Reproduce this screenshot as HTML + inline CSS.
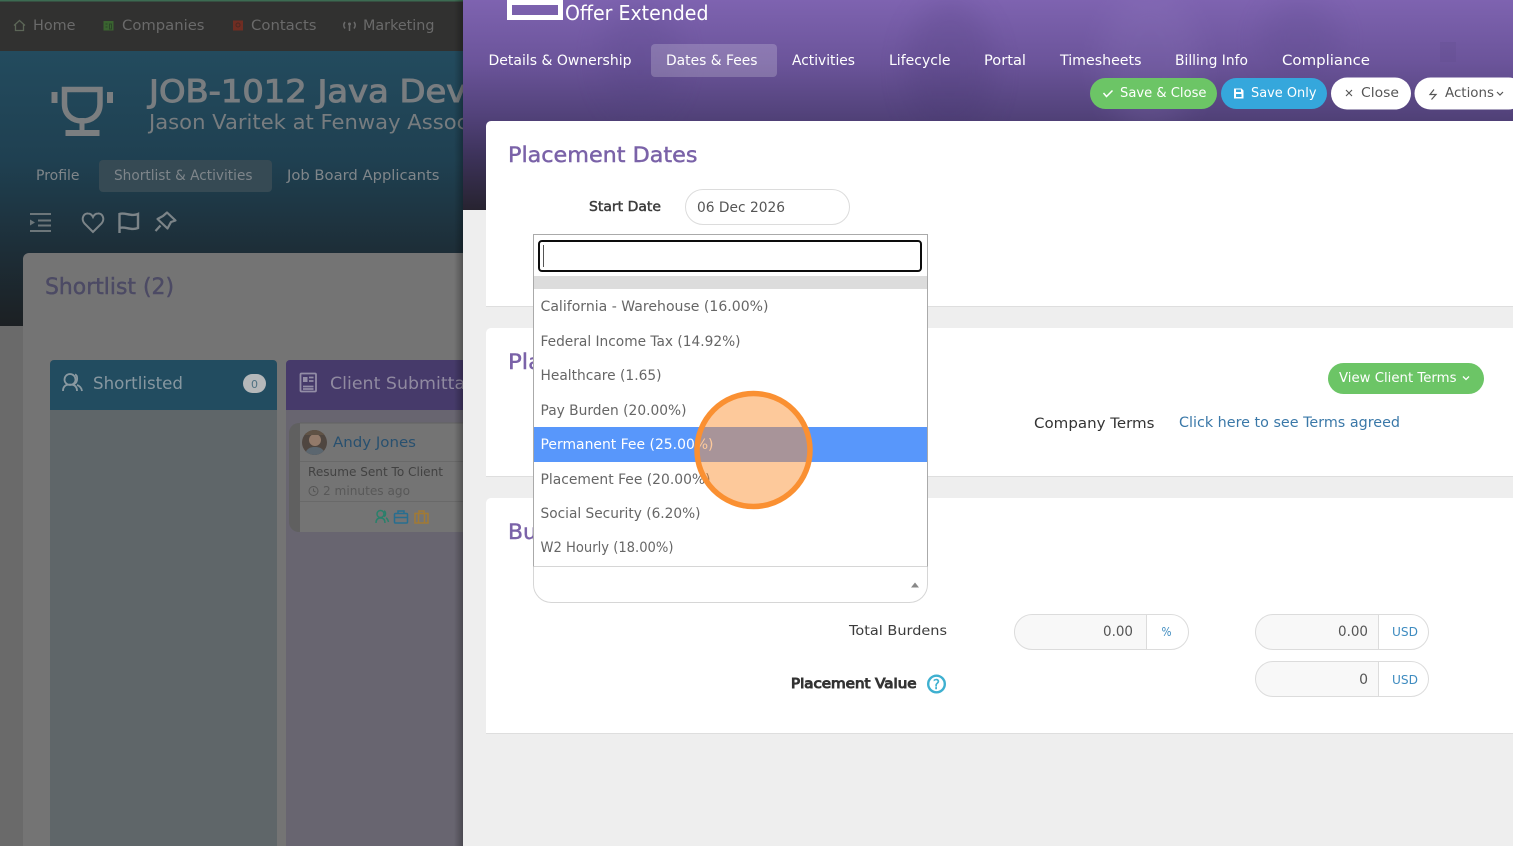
<!DOCTYPE html>
<html lang="en"><head><meta charset="utf-8"><title>Offer Extended</title>
<style>
html,body{margin:0;padding:0;width:1513px;height:846px;overflow:hidden;background:#eee}
svg{display:block}
text{font-family:"DejaVu Sans","Liberation Sans",sans-serif;white-space:pre}
.m{paint-order:stroke;stroke-width:.45px;stroke:currentColor}
.h{paint-order:stroke;stroke-width:1px;stroke:currentColor}
</style></head><body>
<svg xmlns="http://www.w3.org/2000/svg" width="1513" height="846" viewBox="0 0 1513 846">
<defs>
<linearGradient id="lh" x1="0" y1="0" x2="0" y2="1"><stop offset="0" stop-color="#234b5e"/><stop offset=".4" stop-color="#1f4051"/><stop offset=".72" stop-color="#1d2e38"/><stop offset="1" stop-color="#1c2023"/></linearGradient>
<linearGradient id="rh" x1="0" y1="0" x2="0" y2="1"><stop offset="0" stop-color="#7e63b0"/><stop offset=".3" stop-color="#6b549a"/><stop offset=".55" stop-color="#52427a"/><stop offset=".75" stop-color="#3c3259"/><stop offset="1" stop-color="#272330"/></linearGradient>
<linearGradient id="sh" x1="0" y1="0" x2="1" y2="0"><stop offset="0" stop-color="#000" stop-opacity="0"/><stop offset="1" stop-color="#000" stop-opacity=".28"/></linearGradient>
<clipPath id="lc"><rect x="0" y="0" width="463" height="846"/></clipPath>
<clipPath id="av"><circle cx="314.5" cy="442.5" r="12.5"/></clipPath>
<filter id="bl"><feGaussianBlur stdDeviation="14"/></filter>
</defs>

<!-- LEFT DIMMED PAGE -->
<g clip-path="url(#lc)">
<rect width="463" height="846" fill="#6a6a6a"/>
<rect width="463" height="51" fill="#313130"/>
<rect width="463" height="1.5" fill="#3c6b52"/>
<rect y="51" width="463" height="275" fill="url(#lh)"/>
<path d="M14 25.5 19.5 20.5 25 25.5M15.5 24.5V30.5H23.5V24.5" fill="none" stroke="#5c6657" stroke-width="1.3"/>
<text x="33" y="30" font-size="14" fill="#6a6a6a" textLength="42.5" lengthAdjust="spacingAndGlyphs">Home</text>
<path d="M103.5 21h10v9.5h-10z" fill="#3a6430"/><path d="M105.5 24h2M105.5 27h2M109.5 24h2v5h-2z" stroke="#2a4527" stroke-width="1" fill="none"/>
<text x="122" y="30" font-size="14" fill="#6a6a6a" textLength="82.5" lengthAdjust="spacingAndGlyphs">Companies</text>
<rect x="233" y="20.5" width="10" height="10" fill="#702d22"/><circle cx="238" cy="25" r="2" fill="none" stroke="#4a2822"/>
<text x="251" y="30" font-size="14" fill="#6a6a6a" textLength="65.5" lengthAdjust="spacingAndGlyphs">Contacts</text>
<path d="M349.5 24v7M345 22c-1.500 2-1.500 4.500 0 6.500M354 22c1.500 2 1.500 4.500 0 6.500" fill="none" stroke="#6a6a6a" stroke-width="1.5"/><circle cx="349.5" cy="24" r="1.500" fill="#6a6a6a"/>
<text x="363" y="30" font-size="14" fill="#6a6a6a" textLength="71.5" lengthAdjust="spacingAndGlyphs">Marketing</text>

<!-- trophy -->
<g fill="#7b7e80">
<rect x="51.5" y="92" width="6" height="11"/><rect x="107" y="92" width="6" height="11"/>
<rect x="65.5" y="130" width="34" height="6"/><rect x="79.5" y="118" width="5" height="13"/>
</g>
<path d="M64.5 89.5H100V104C100 115 92 121 82.25 121S64.5 115 64.5 104Z" fill="none" stroke="#7b7e80" stroke-width="5.5"/>
<text x="149" y="102" font-size="31" class="h" color="#797d80" fill="#797d80" textLength="338" lengthAdjust="spacingAndGlyphs">JOB-1012 Java Deve</text>
<text x="149" y="129" font-size="20" fill="#777c7f" textLength="338" lengthAdjust="spacingAndGlyphs">Jason Varitek at Fenway Associa</text>

<rect x="99" y="160" width="173" height="32" rx="4" fill="#364a54"/>
<text x="36" y="180" font-size="14" fill="#80868a" textLength="43.5" lengthAdjust="spacingAndGlyphs">Profile</text>
<text x="114" y="180" font-size="14" fill="#7e858a" textLength="138.5" lengthAdjust="spacingAndGlyphs">Shortlist &amp; Activities</text>
<text x="287" y="180" font-size="14" fill="#80868a" textLength="152.5" lengthAdjust="spacingAndGlyphs">Job Board Applicants</text>

<!-- icon row -->
<g fill="none" stroke="#6c767a" stroke-width="2">
<path d="M30 214h21M38 220.5h13M38 225.5h13M30 231h21"/>
<path d="M93 232 84.500 223.500C80.500 218.500 84 213 88 213.500 90.500 213.500 92 215 93 217 94 215 95.500 213.500 98 213.500 102 213 105.500 218.500 101.500 223.500Z" stroke="#7c8488"/>
<path d="M119.5 233V214C125 212 131 217 138 214V228C131 231 125 226 119.500 228" stroke="#7c8488" stroke-width="2.4"/>
<path d="M167 212.500 175.500 220.500 171 222 167.500 228.500 157.500 219 163 216ZM160.500 225.500 155.500 231" stroke="#7c8488" stroke-width="2.2" stroke-linejoin="round"/>
</g>
<path d="M30 219.5 35 222.5 30 225.5Z" fill="#6c767a"/>

<!-- main card -->
<rect x="23" y="253" width="460" height="620" rx="6" fill="#747474"/>
<text x="45" y="294" font-size="22" class="m" color="#4c4a64" fill="#4c4a64" textLength="129" lengthAdjust="spacingAndGlyphs">Shortlist (2)</text>

<!-- shortlisted column -->
<path d="M50 410V364a4 4 0 0 1 4-4H273a4 4 0 0 1 4 4V410Z" fill="#224c60"/>
<rect x="50" y="410" width="227" height="436" fill="#5f6669"/>
<g fill="none" stroke="#8a99a1" stroke-width="1.8"><circle cx="70" cy="379.5" r="5.500"/><path d="M63 391c0-5 3-6.500 7-6.500s7 1.500 7 6.500M75 374.500c3 1 3 8-1 9.500M77 385c3 1 4.500 3 5 6"/></g>
<text x="93" y="389" font-size="17" fill="#8797a0" textLength="90" lengthAdjust="spacingAndGlyphs">Shortlisted</text>
<rect x="243" y="374" width="23" height="19" rx="9.5" fill="#b5b8ba"/>
<text x="254.5" y="388" font-size="11" text-anchor="middle" fill="#4f7182">0</text>

<!-- submittal column -->
<path d="M286 410V364a4 4 0 0 1 4-4H480V410Z" fill="#463a6a"/>
<rect x="286" y="410" width="190" height="436" fill="#686570"/>
<g fill="none" stroke="#938da6" stroke-width="1.8"><rect x="300.5" y="373.500" width="15.5" height="18" rx="1"/><path d="M303 386.500h10.500M303 389h10.500M309 377.500h4.500M309 381h4.500"/></g>
<rect x="303" y="377" width="4.5" height="5" fill="#938da6"/>
<text x="330" y="389" font-size="17" fill="#908aa0" textLength="140" lengthAdjust="spacingAndGlyphs">Client Submittal</text>

<!-- candidate card -->
<path d="M300 423H299a10 10 0 0 0-10 10V522a10 10 0 0 0 10 10H300Z" fill="#606060"/>
<rect x="300" y="423" width="170" height="109" fill="#747474"/>
<path d="M300 423H470" stroke="#626262"/>
<g clip-path="url(#av)"><rect x="302" y="430" width="25" height="25" fill="#4f4640"/><circle cx="315" cy="440" r="6" fill="#927a6a"/><path d="M305 455c1-7 6-8 10-8s9 1 10 8Z" fill="#5b666f"/><rect x="302" y="430" width="25" height="5" fill="#5f5245"/></g>
<text x="333" y="447" font-size="14.5" fill="#28506f" textLength="83" lengthAdjust="spacingAndGlyphs">Andy Jones</text>
<path d="M300 461.5H470M300 501.5H470" stroke="#696969"/>
<text x="308" y="476" font-size="12.5" fill="#424242" textLength="135" lengthAdjust="spacingAndGlyphs">Resume Sent To Client</text>
<circle cx="313.5" cy="491" r="4.5" fill="none" stroke="#555" stroke-width="1"/><path d="M313.5 488.500v2.500l2 1" fill="none" stroke="#555"/>
<text x="323" y="495" font-size="12.5" fill="#585858" textLength="87" lengthAdjust="spacingAndGlyphs">2 minutes ago</text>
<g fill="none" stroke-width="1.5">
<g stroke="#2a806b"><circle cx="380.5" cy="514" r="3.5"/><path d="M376 523c0-4 2-5 4.500-5s4.500 1 4.500 5M384 511c2 .5 2 4.500 0 5.500M386 518c1.500 .5 2 2 2.500 4"/></g>
<g stroke="#276e90"><rect x="394.5" y="513.5" width="13" height="9.5" rx="1"/><path d="M398 513.500v-2.500h6v2.500M394.500 517.500h13"/></g>
<g stroke="#a17a34"><rect x="415" y="513.5" width="13" height="9.5"/><path d="M418.500 513.500v9.500M424.500 513.500v9.500M419 513.500v-2.500h5v2.500"/></g>
</g>
</g>

<!-- RIGHT PANEL -->
<rect x="454" width="9" height="846" fill="url(#sh)"/>
<rect x="463" width="1050" height="846" fill="#eeeeee"/>
<rect x="463" width="1050" height="210" fill="url(#rh)"/>
<g filter="url(#bl)" opacity=".16">
<ellipse cx="950" cy="70" rx="45" ry="70" fill="#3c2e66"/>
<ellipse cx="1150" cy="60" rx="50" ry="70" fill="#9a84c8"/>
<ellipse cx="640" cy="60" rx="40" ry="60" fill="#4c3c7c"/>
<ellipse cx="1300" cy="40" rx="40" ry="40" fill="#4c3c7c"/>
</g>
<rect x="1440" y="42" width="16" height="20" fill="#5e4a8a" opacity=".25"/>

<!-- offer icon -->
<path d="M507 0H563V20H507ZM512 5V15H558V5Z" fill="#fff" fill-rule="evenodd"/>
<text x="565" y="20" font-size="20" fill="#fff" textLength="143.5" lengthAdjust="spacingAndGlyphs">Offer Extended</text>

<!-- tabs -->
<rect x="651" y="44" width="126" height="33" rx="4" fill="#fff" fill-opacity=".2"/>
<g font-size="14" fill="#fff">
<text x="488.5" y="65" textLength="143" lengthAdjust="spacingAndGlyphs">Details &amp; Ownership</text>
<text x="666" y="65" textLength="91.5" lengthAdjust="spacingAndGlyphs">Dates &amp; Fees</text>
<text x="792" y="65" textLength="63" lengthAdjust="spacingAndGlyphs">Activities</text>
<text x="889" y="65" textLength="61.5" lengthAdjust="spacingAndGlyphs">Lifecycle</text>
<text x="984" y="65" textLength="42" lengthAdjust="spacingAndGlyphs">Portal</text>
<text x="1060" y="65" textLength="81.5" lengthAdjust="spacingAndGlyphs">Timesheets</text>
<text x="1175" y="65" textLength="73" lengthAdjust="spacingAndGlyphs">Billing Info</text>
<text x="1282" y="65" textLength="88" lengthAdjust="spacingAndGlyphs">Compliance</text>
</g>

<!-- action buttons -->
<rect x="1090" y="78" width="127" height="31" rx="15.5" fill="#6cc566"/>
<path d="M1103.5 93 1106.5 96.500 1112.5 90.500" fill="none" stroke="#fff" stroke-width="1.5"/>
<text x="1120" y="97" font-size="13" fill="#fff" textLength="86.5" lengthAdjust="spacingAndGlyphs">Save &amp; Close</text>
<rect x="1221" y="78" width="106" height="31" rx="15.5" fill="#35a7dc"/>
<path d="M1234 88.500h7.500l2 2v8h-9.500Z" fill="#fff"/><rect x="1236" y="89.5" width="5" height="2.5" fill="#35a7dc"/><rect x="1236" y="94" width="5.5" height="3" fill="#35a7dc"/>
<text x="1251" y="97" font-size="13" fill="#fff" textLength="65.5" lengthAdjust="spacingAndGlyphs">Save Only</text>
<rect x="1331" y="77.5" width="80" height="32" rx="16" fill="#fff"/>
<path d="M1346 90 1352 96M1352 90 1346 96" stroke="#555" stroke-width="1.1"/>
<text x="1361" y="97" font-size="13" fill="#555" textLength="38" lengthAdjust="spacingAndGlyphs">Close</text>
<rect x="1414.5" y="77.5" width="110" height="32" rx="16" fill="#fff"/>
<path d="M1434 89.500 1430 94.500H1436L1431.500 99.500" fill="none" stroke="#555" stroke-width="1.2"/>
<text x="1445" y="97" font-size="13" fill="#555" textLength="49" lengthAdjust="spacingAndGlyphs">Actions</text>
<path d="M1497 92 1500 95 1503 92" fill="none" stroke="#555" stroke-width="1.2"/>

<!-- white cards -->
<path d="M486 306V126a5 5 0 0 1 5-5H1513V306Z" fill="#fff"/>
<path d="M486 306.5H1513" stroke="#dedede"/>
<path d="M486 476V333a5 5 0 0 1 5-5H1513V476Z" fill="#fff"/>
<path d="M486 476.5H1513" stroke="#dedede"/>
<path d="M486 733V503a5 5 0 0 1 5-5H1513V733Z" fill="#fff"/>
<path d="M486 733.5H1513" stroke="#dedede"/>

<text x="508" y="162" font-size="21.5" class="m" color="#7a62a8" fill="#7a62a8" textLength="189.5" lengthAdjust="spacingAndGlyphs">Placement Dates</text>
<text x="589" y="211" font-size="13.5" class="m" color="#3b3b3b" fill="#3b3b3b" textLength="72" lengthAdjust="spacingAndGlyphs">Start Date</text>
<rect x="685.5" y="189.5" width="164" height="35" rx="17.5" fill="#fff" stroke="#dcdcdc"/>
<text x="697" y="212" font-size="14" fill="#555" textLength="88" lengthAdjust="spacingAndGlyphs">06 Dec 2026</text>

<text x="508" y="369" font-size="21.5" class="m" color="#7a62a8" fill="#7a62a8" textLength="180" lengthAdjust="spacingAndGlyphs">Placement Fees</text>
<text x="508" y="539" font-size="21.5" class="m" color="#7a62a8" fill="#7a62a8" textLength="90" lengthAdjust="spacingAndGlyphs">Burdens</text>

<rect x="1328" y="363" width="156" height="31" rx="15.5" fill="#6cc566"/>
<text x="1339" y="382" font-size="13" fill="#fff" textLength="117.5" lengthAdjust="spacingAndGlyphs">View Client Terms</text>
<path d="M1463 376.500 1466 379.500 1469 376.500" fill="none" stroke="#fff" stroke-width="1.3"/>
<text x="1034" y="428" font-size="14" fill="#333" textLength="120.5" lengthAdjust="spacingAndGlyphs">Company Terms</text>
<text x="1179" y="427" font-size="14" fill="#3a78a8" textLength="221" lengthAdjust="spacingAndGlyphs">Click here to see Terms agreed</text>

<!-- bottom fields -->
<text x="849" y="635" font-size="13.5" fill="#3b3b3b" textLength="98" lengthAdjust="spacingAndGlyphs">Total Burdens</text>
<path d="M1146.5 614.5H1032a17.5 17.5 0 0 0 0 35H1146.5Z" fill="#f8f8f8"/>
<rect x="1014.5" y="614.5" width="174" height="35" rx="17.5" fill="none" stroke="#dcdcdc"/><path d="M1146.5 614.5V649.5" stroke="#dcdcdc"/>
<text x="1133" y="636" font-size="14" text-anchor="end" fill="#555" textLength="30" lengthAdjust="spacingAndGlyphs">0.00</text>
<text x="1161.5" y="636" font-size="12" fill="#3f8cc0" textLength="10" lengthAdjust="spacingAndGlyphs">%</text>

<path d="M1378.5 614.5H1273a17.5 17.5 0 0 0 0 35H1378.5Z" fill="#f8f8f8"/>
<rect x="1255.5" y="614.5" width="173" height="35" rx="17.5" fill="none" stroke="#dcdcdc"/><path d="M1378.5 614.5V649.5" stroke="#dcdcdc"/>
<text x="1368" y="636" font-size="14" text-anchor="end" fill="#555" textLength="30" lengthAdjust="spacingAndGlyphs">0.00</text>
<text x="1392" y="636" font-size="12.5" fill="#3f8cc0" textLength="26" lengthAdjust="spacingAndGlyphs">USD</text>

<path d="M1378.5 661.5H1273a17.5 17.5 0 0 0 0 35H1378.5Z" fill="#f8f8f8"/>
<rect x="1255.5" y="661.5" width="173" height="35" rx="17.5" fill="none" stroke="#dcdcdc"/><path d="M1378.5 661.5V696.5" stroke="#dcdcdc"/>
<text x="1368" y="684" font-size="14" text-anchor="end" fill="#555">0</text>
<text x="1392" y="684" font-size="12.5" fill="#3f8cc0" textLength="26" lengthAdjust="spacingAndGlyphs">USD</text>

<text x="791" y="688" font-size="13.5" class="h" color="#333" fill="#333" textLength="125.5" lengthAdjust="spacingAndGlyphs">Placement Value</text>
<circle cx="936.5" cy="684" r="8.3" fill="none" stroke="#3eb0d0" stroke-width="2.4"/>
<text x="936.5" y="689" font-size="13" class="m" color="#3eb0d0" text-anchor="middle" fill="#3eb0d0">?</text>

<!-- select box + dropdown -->
<path d="M533.5 566.5V584.5a18 18 0 0 0 18 18H909.5a18 18 0 0 0 18-18V566.5Z" fill="#fff" stroke="#d6d6d6"/>
<path d="M911 587.5 915 582.5 919 587.5Z" fill="#888"/>
<rect x="533.5" y="234.5" width="394" height="332" fill="#fff" stroke="#aaa"/>
<path d="M533.5 566.5H927.5" stroke="#d6d6d6"/>
<rect x="539" y="241" width="382" height="30" rx="3" fill="#fff" stroke="#0d0d0d" stroke-width="2"/>
<path d="M543.5 245V267" stroke="#555"/>
<rect x="534" y="276" width="393" height="13" fill="#dcdcdc"/>
<rect x="534" y="427" width="393" height="35" fill="#5897fb"/>
<g font-size="14" fill="#666">
<text x="540.5" y="311" textLength="228" lengthAdjust="spacingAndGlyphs">California - Warehouse (16.00%)</text>
<text x="540.5" y="346" textLength="200" lengthAdjust="spacingAndGlyphs">Federal Income Tax (14.92%)</text>
<text x="540.5" y="380" textLength="121" lengthAdjust="spacingAndGlyphs">Healthcare (1.65)</text>
<text x="540.5" y="415" textLength="146" lengthAdjust="spacingAndGlyphs">Pay Burden (20.00%)</text>
<text x="540.5" y="449" fill="#fff" textLength="173" lengthAdjust="spacingAndGlyphs">Permanent Fee (25.00%)</text>
<text x="540.5" y="484" textLength="170" lengthAdjust="spacingAndGlyphs">Placement Fee (20.00%)</text>
<text x="540.5" y="518" textLength="160" lengthAdjust="spacingAndGlyphs">Social Security (6.20%)</text>
<text x="540.5" y="552" textLength="133" lengthAdjust="spacingAndGlyphs">W2 Hourly (18.00%)</text>
</g>

<!-- highlight circle -->
<circle cx="753.5" cy="450" r="56.5" fill="#fa9032" fill-opacity=".49" stroke="#fa9032" stroke-width="5.5"/>
</svg>
</body></html>
